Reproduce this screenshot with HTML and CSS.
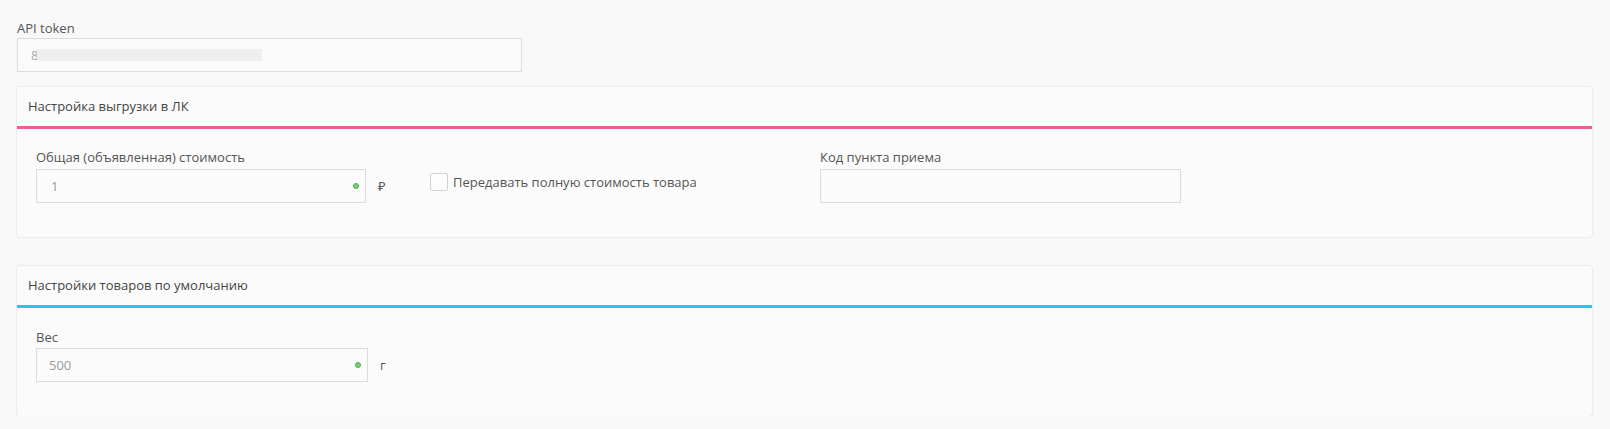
FILE: index.html
```html
<!DOCTYPE html>
<html lang="ru">
<head>
<meta charset="utf-8">
<title>Настройки</title>
<link rel="stylesheet" href="styles.css">
</head>
<body>
<div class="page">
  <div class="token-field">
    <div class="label">API token</div>
    <div class="input input-token"><span class="token-char">8</span><span class="token-mask"></span></div>
  </div>

  <section class="card card-pink">
    <div class="card-header">Настройка выгрузки в ЛК</div>
    <div class="card-body">
      <div class="col col-cost">
        <div class="label">Общая (объявленная) стоимость</div>
        <div class="input-row">
          <div class="input input-num"><span class="value">1</span><span class="dot"></span></div>
          <span class="unit">₽</span>
        </div>
      </div>
      <div class="col col-check">
        <label class="check"><span class="box"></span><span class="check-text">Передавать полную стоимость товара</span></label>
      </div>
      <div class="col col-code">
        <div class="label">Код пункта приема</div>
        <div class="input input-code"></div>
      </div>
    </div>
  </section>

  <section class="card card-blue">
    <div class="card-header">Настройки товаров по умолчанию</div>
    <div class="card-body">
      <div class="col col-cost">
        <div class="label">Вес</div>
        <div class="input-row">
          <div class="input input-num input-weight"><span class="value">500</span><span class="dot"></span></div>
          <span class="unit">г</span>
        </div>
      </div>
    </div>
  </section>
</div>
</body>
</html>
```

FILE: styles.css
```css
* { box-sizing: border-box; }
html, body {
  margin: 0;
  background: #f8f8f8;
}
body {
  font-family: "Open Sans", "Noto Sans", sans-serif;
  font-size: 13px;
  line-height: 18px;
  color: #555;
}
.page {
  padding: 19px 18px 0 17px;
}
.label {
  height: 18px;
  white-space: nowrap;
}
.token-field .label { margin-bottom: 1px; }
.input {
  position: relative;
  height: 34px;
  border: 1px solid #dcdcdc;
  background: #fbfbfb;
  display: flex;
  align-items: center;
}
.input-token {
  width: 505px;
  padding-left: 13px;
}
.token-char {
  color: #aaa;
  width: 6px;
  overflow: hidden;
}
.token-mask {
  display: block;
  width: 225px;
  height: 12px;
  background: #efefef;
}
.card {
  margin-top: 15px;
  background: #fbfbfb;
  border-radius: 3px;
  box-shadow: 0 0 2px rgba(0, 0, 0, 0.18);
}
.card + .card { margin-top: 29px; }
.card-header {
  height: 42px;
  padding: 10px 11px 0;
  color: #444;
}
.card-pink .card-header { border-bottom: 3px solid #ec5f8e; }
.card-blue .card-header { border-bottom: 3px solid #2ec3e4; }
.card-body {
  height: 108px;
  padding: 19px 19px 0;
  display: flex;
  align-items: flex-start;
}
.card-blue .card-body { padding-top: 20px; }
.col-cost { width: 394px; }
.col-check { width: 390px; padding-top: 25px; }
.col-code { width: 361px; }
.input-row {
  display: flex;
  align-items: center;
  margin-top: 3px;
}
.card-blue .input-row { margin-top: 2px; }
.input-num {
  width: 330px;
  padding-left: 14px;
}
.input-weight { width: 332px; padding-left: 12px; }
.value { color: #999; }
.dot {
  position: absolute;
  right: 6px;
  top: 13px;
  width: 6px;
  height: 6px;
  border-radius: 50%;
  background: #7ccf7c;
  border: 1px solid #4fae4f;
}
.unit {
  margin-left: 12px;
  color: #555;
}
.input-code {
  width: 361px;
  margin-top: 3px;
}
.check {
  display: flex;
  align-items: center;
  white-space: nowrap;
}
.box {
  width: 18px;
  height: 18px;
  border: 1px solid #d2d2d2;
  border-radius: 2px;
  background: #fdfdfd;
  margin-right: 5px;
}
```
